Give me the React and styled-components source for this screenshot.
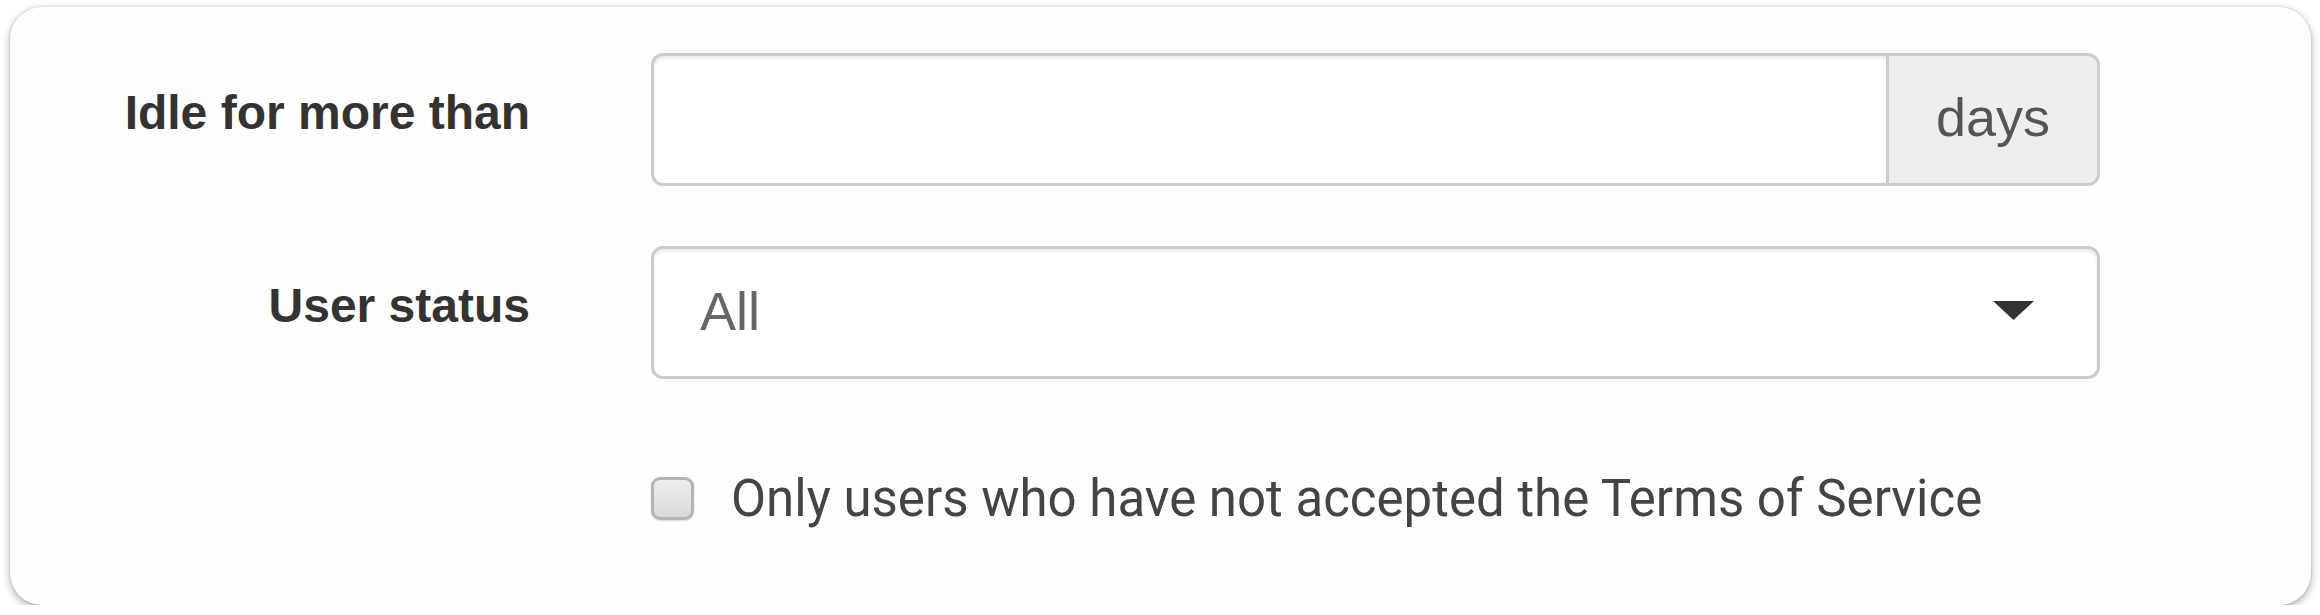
import styled, { createGlobalStyle } from 'styled-components'

const GlobalStyle = createGlobalStyle`
  html, body {
    margin: 0;
    padding: 0;
    background: #ffffff;
  }
`

const Card = styled.form`
  box-sizing: border-box;
  margin: 7px 0 0 10px;
  width: 2301px;
  height: 598px;
  padding: 46px 211px 0 110px;
  background: #fefefe;
  border-radius: 32px;
  box-shadow: 0 3px 8px rgba(0, 0, 0, 0.32), 0 0 2px rgba(0, 0, 0, 0.2);
  display: flex;
  flex-direction: column;
`

const Row = styled.div`
  display: grid;
  grid-template-columns: 410px 1449px;
  column-gap: 121px;
  align-items: center;
  margin-top: ${p => p.$gap || 0}px;
`

const Label = styled.label`
  text-align: right;
  font-family: "Liberation Sans", Arial, sans-serif;
  font-weight: 700;
  font-size: 48px;
  color: #333333;
  padding-bottom: 14px;
`

const InputGroup = styled.div`
  display: flex;
  height: 133px;
`

const TextInput = styled.input`
  flex: 1;
  min-width: 0;
  box-sizing: border-box;
  height: 100%;
  margin: 0;
  border: 3px solid #cccccc;
  border-right: 0;
  border-radius: 12px 0 0 12px;
  box-shadow: inset 0 3px 3px rgba(0, 0, 0, 0.075);
  background: #ffffff;
  font-family: "Liberation Sans", Arial, sans-serif;
  font-size: 54px;
  outline: none;
`

const Addon = styled.span`
  box-sizing: border-box;
  width: 214px;
  height: 100%;
  display: flex;
  align-items: center;
  justify-content: center;
  padding-bottom: 6px;
  background: #eeeeee;
  border: 3px solid #cccccc;
  border-radius: 0 12px 12px 0;
  font-family: "Liberation Sans", Arial, sans-serif;
  font-size: 54px;
  color: #555555;
`

const Select = styled.div`
  box-sizing: border-box;
  height: 133px;
  display: flex;
  align-items: center;
  justify-content: space-between;
  padding: 0 63px 4px 46px;
  background: #ffffff;
  border: 3px solid #cccccc;
  border-radius: 12px;
  box-shadow: inset 0 3px 3px rgba(0, 0, 0, 0.075);
  font-family: "Liberation Sans", Arial, sans-serif;
  font-size: 54px;
  color: #666666;
`

const Caret = () => (
  <svg width="41" height="19" viewBox="0 0 41 19">
    <polygon points="0,0 41,0 20.5,19" fill="#333333" />
  </svg>
)

const CheckRow = styled.label`
  display: flex;
  align-items: center;
  gap: 37px;
  font-family: Roboto, "Liberation Sans", sans-serif;
  font-size: 51px;
  color: #444444;
`

const Box = styled.span`
  box-sizing: border-box;
  flex: none;
  width: 43px;
  height: 43px;
  border: 3px solid #b4b4b4;
  border-radius: 9px;
  background: linear-gradient(#eeeeee, #d9d9d9);
  box-shadow: 0 1px 2px rgba(0, 0, 0, 0.15);
`

export default function App() {
  return (
    <>
      <GlobalStyle />
      <Card onSubmit={e => e.preventDefault()}>
        <Row>
          <Label>Idle for more than</Label>
          <InputGroup>
            <TextInput type="text" />
            <Addon>days</Addon>
          </InputGroup>
        </Row>
        <Row $gap={60}>
          <Label>User status</Label>
          <Select>
            <span>All</span>
            <Caret />
          </Select>
        </Row>
        <Row $gap={90}>
          <span />
          <CheckRow>
            <Box />
            Only users who have not accepted the Terms of Service
          </CheckRow>
        </Row>
      </Card>
    </>
  )
}
